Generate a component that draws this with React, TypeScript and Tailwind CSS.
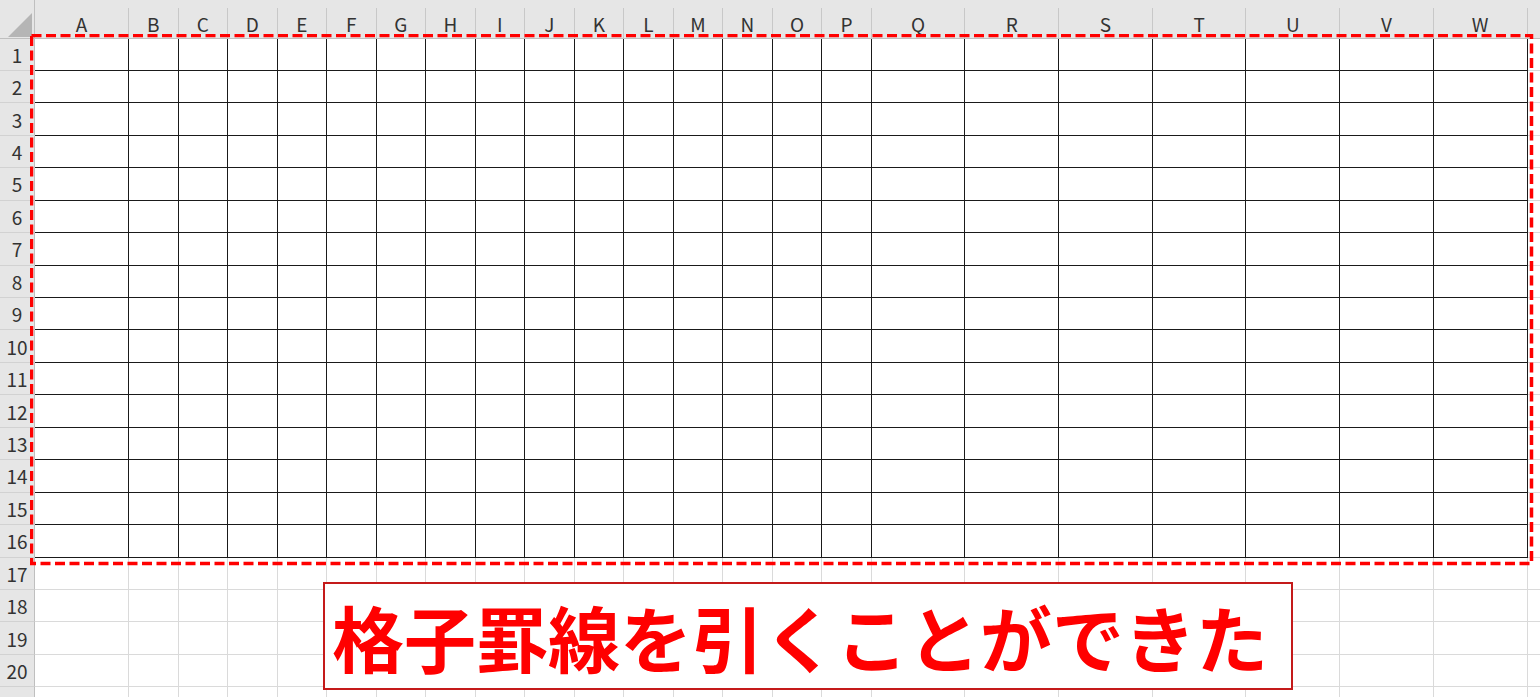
import React from "react";

const COLS = ["A","B","C","D","E","F","G","H","I","J","K","L","M","N","O","P","Q","R","S","T","U","V","W","X"];
const ROWS = Array.from({ length: 21 }, (_, i) => i + 1);

export default function App() {
  const font = { fontFamily: '"Noto Sans CJK JP", "Noto Sans", sans-serif' };
  return (
    <div className="relative w-[1540px] h-[697px] overflow-hidden bg-white" style={font}>
      <div className="grid grid-cols-[35px_94px_repeat(15,49.53px)_repeat(7,93.7px)_94px] grid-rows-[38.5px_repeat(21,32.45px)]">
        {/* corner */}
        <div className="bg-[#e6e6e6] border-r border-b border-[#bfbfbf] flex items-end justify-end pr-[2px] pb-[1px]">
          <svg width="24" height="24" viewBox="0 0 24 24">
            <polygon points="24,0 24,24 0,24" fill="#b5b5b5" />
          </svg>
        </div>
        {COLS.map((c) => (
          <div key={c} className="bg-[#e6e6e6] border-b border-[#bfbfbf] pt-[8px]">
            <div className="h-full border-r border-[#c8c8c8] flex items-center justify-center pt-[1px] text-[19px] text-[#333333] leading-none">
              {c === "X" ? "" : c}
            </div>
          </div>
        ))}
        {ROWS.map((r) => (
          <React.Fragment key={r}>
            <div className="bg-[#e6e6e6] border-r border-r-[#bfbfbf] border-b border-b-[#d2d2d2] flex items-center justify-center text-[19px] text-[#333333] leading-none">
              {r <= 20 ? r : ""}
            </div>
            {COLS.map((c, ci) => {
              const inRange = r <= 16 && ci <= 22;
              return (
                <div
                  key={c}
                  className={
                    "border-r border-b " +
                    (inRange ? "border-r-[#1a1a1a] border-b-[#1a1a1a]" : "border-r-[#dadada] border-b-[#dadada]")
                  }
                />
              );
            })}
          </React.Fragment>
        ))}
      </div>

      {/* red dashed selection outline */}
      <svg className="absolute left-[30px] top-[34px]" width="1504" height="532" viewBox="0 0 1504 532">
        <rect x="1.5" y="1.5" width="1500" height="528" fill="none" stroke="#ff0000" strokeWidth="3.5" strokeDasharray="10 4.5" />
      </svg>

      {/* caption box */}
      <div className="absolute left-[323px] top-[582px] w-[970px] h-[108px] border-2 border-[#c41a1a] bg-white flex items-center justify-center pr-[16px]">
        <span className="text-[72px] font-bold text-[#ff0000] leading-none whitespace-nowrap" style={font}>
          格子罫線を引くことができた
        </span>
      </div>
    </div>
  );
}
